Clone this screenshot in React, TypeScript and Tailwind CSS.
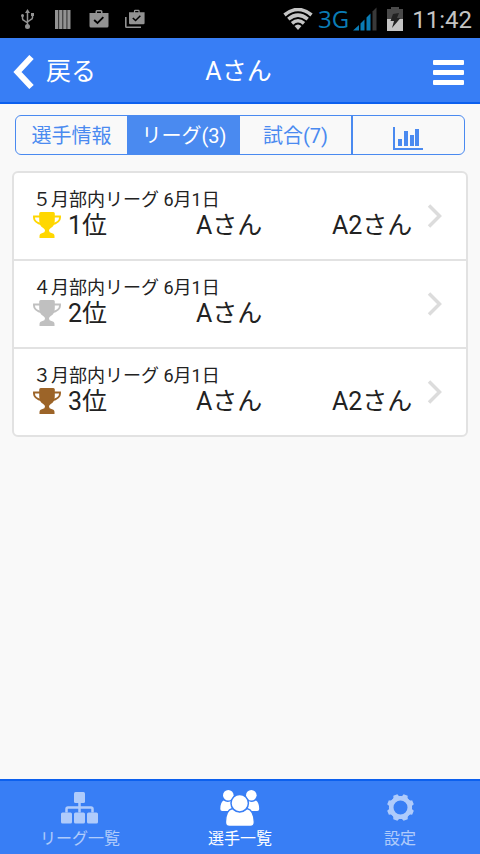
import React, { useState } from "react";

interface League {
  name: string;
  rank: string;
  trophy: string;
  player: string;
  partner?: string;
}

const leagues: League[] = [
  { name: "５月部内リーグ 6月1日", rank: "1位", trophy: "text-[#ffd700]", player: "Aさん", partner: "A2さん" },
  { name: "４月部内リーグ 6月1日", rank: "2位", trophy: "text-[#c0c0c0]", player: "Aさん" },
  { name: "３月部内リーグ 6月1日", rank: "3位", trophy: "text-[#9c6428]", player: "Aさん", partner: "A2さん" },
];

const StoreBag = () => (
  <path
    fillRule="evenodd"
    d="M6 4V2.5A1.5 1.5 0 0 1 7.5 1h4A1.5 1.5 0 0 1 13 2.5V4h6v13a1.5 1.5 0 0 1-1.5 1.5h-16A1.5 1.5 0 0 1 0 17V4zM7.5 4h4V2.5h-4zM5.3 10.3 4 11.7l4 3.6 6.5-6.5-1.3-1.3L8 12.7z"
  />
);

const StatusBar = () => (
  <div className="flex h-[38px] items-center justify-between bg-black pl-5 pr-2">
    <div className="flex items-center text-[#929292]">
      <svg className="h-5 w-4" viewBox="0 0 16 20" fill="none" stroke="currentColor" strokeWidth="1.5">
        <path d="M7.5 2v15M2.5 7v2.5q0 1.5 1.5 2l3.5 2.5M12.5 6v2.5q0 1.5-1.5 2L7.5 13" />
        <path d="M7.5 0 5 4h5zM5 17.5a2.5 2.5 0 1 0 5 0 2.5 2.5 0 1 0-5 0M1 6.5a1.5 1.5 0 1 0 3 0 1.5 1.5 0 1 0-3 0M11 4h3v3h-3z" fill="currentColor" stroke="none" />
      </svg>
      <svg className="ml-[19px] h-[19px] w-4" viewBox="0 0 16 19" fill="currentColor">
        <path d="M0 0h3.4v19H0zM4.1 0h3.4v19H4.1zM8.2 0h3.4v19H8.2zM12.3 0h3.2v19h-3.2z" />
      </svg>
      <svg className="ml-[18px] h-5 w-5" viewBox="0 0 19 20" fill="currentColor">
        <StoreBag />
      </svg>
      <svg className="ml-4 h-5 w-5" viewBox="0 0 20 20" fill="currentColor">
        <g transform="translate(4 0) scale(.82)">
          <StoreBag />
        </g>
        <path d="M0 8h1.6v9.4H16V19H1.5A1.5 1.5 0 0 1 0 17.5z" />
      </svg>
    </div>
    <div className="flex items-center text-[#c4c4c4]">
      <svg className="h-[22px] w-[30px]" viewBox="0 0 30 22" fill="none" stroke="currentColor" strokeWidth="3.6">
        <path d="M1.5 7Q15-4 28.5 7M5.3 11.2Q15 3.2 24.7 11.2M9 15.3Q15 10.2 21 15.3" />
        <path d="M15 22l-3.5-4q3.5-3 7 0z" fill="currentColor" stroke="none" />
      </svg>
      <span className="ml-[5px] font-['Open_Sans',sans-serif] text-2xl leading-8 text-[#0a7cb5]">3G</span>
      <svg className="ml-1 h-6 w-6" viewBox="0 0 24 24" fill="#0a7cb5">
        <path d="M0 23.5 6 18v5.5zM7.5 16.5l4-4v11h-4zM13.5 10.5l4-4v17h-4z" />
        <path d="M19.5 4.5l4-4v23h-4z" fill="#393939" />
      </svg>
      <svg className="ml-[10px] h-6 w-4" viewBox="0 0 16 24">
        <path d="M4 0h8v2h4v22H0V2h4z" fill="#4a4a4a" />
        <path d="M0 12h16v12H0z" fill="#c4c4c4" />
        <path d="M6 7l6-1-2 5h3.5L5 21l2-7H3.5z" fill="#222" />
      </svg>
      <span className="ml-[9px] pt-[2px] text-2xl leading-8">11:42</span>
    </div>
  </div>
);

const Header = () => (
  <header className="grid h-[66px] grid-cols-3 items-center border-b-2 border-[#0c60ee] bg-[#387ef5] pl-[13px] pr-4 pt-1 text-[25px] leading-8 text-white">
    <button type="button" className="flex items-center gap-3 justify-self-start">
      <svg className="h-[34px] w-[21px]" viewBox="0 0 21 34" fill="none" stroke="currentColor" strokeWidth="6">
        <path d="M18.5 2 4.5 17l14 15" />
      </svg>
      戻る
    </button>
    <h1 className="justify-self-center">Aさん</h1>
    <button type="button" aria-label="メニュー" className="flex w-[31px] flex-col gap-[5px] justify-self-end">
      <span className="h-[5px] rounded-[1px] bg-white" />
      <span className="h-[5px] rounded-[1px] bg-white" />
      <span className="h-[5px] rounded-[1px] bg-white" />
    </button>
  </header>
);

const tabs = ["選手情報", "リーグ(3)", "試合(7)"];

const Tabs = () => {
  const [active, setActive] = useState(1);

  return (
    <div className="mx-[15px] mt-[11px] grid h-10 grid-cols-4 overflow-hidden rounded-md border border-[#4a8af0] text-xl leading-6 text-[#4a8af0]">
      {tabs.map((label, i) => (
        <button
          key={label}
          type="button"
          onClick={() => setActive(i)}
          className={
            active === i
              ? "bg-[#4a8af0] pt-[2px] text-white"
              : "border-r border-[#4a8af0] pt-[2px]"
          }
        >
          {label}
        </button>
      ))}
      <button
        type="button"
        aria-label="グラフ"
        onClick={() => setActive(3)}
        className="flex items-center justify-center border-l border-[#4a8af0] pr-[2px] pt-[6px]"
      >
        <svg className="h-[23px] w-[30px]" viewBox="0 0 30 23" fill="currentColor">
          <path d="M0 0h2v21h28v2H0zM5 12h4v7H5zM11 4h4v15h-4zM17 8h4v11h-4zM22 2h4v17h-4z" />
        </svg>
      </button>
    </div>
  );
};

const TrophyIcon = ({ color }: { color: string }) => (
  <svg className={`h-[26px] w-7 ${color}`} viewBox="0 0 28 26" fill="currentColor">
    <path d="M6.2 1.5Q6.2 0 7.7 0h12.6q1.5 0 1.500 1.500V8q0 6-4 8-1.800 1-1.800 2.500 0 2 2.500 2.500 3 .5 3 3v2h-15v-2q0-2.500 3-3 2.500-.5 2.500-2.500 0-1.500-1.800-2.500-4-2-4-8z" />
    <path d="M7 4.5H1v1.3q0 4.8 8.5 6.7M21 4.5h6v1.3q0 4.8-8.5 6.7" fill="none" stroke="currentColor" strokeWidth="1.9" />
  </svg>
);

const LeagueRow = ({ league }: { league: League }) => (
  <li className="border-b-2 border-[#e2e2e2] last:border-b-0">
    <button type="button" className="flex w-full items-center pb-[19px] pl-[19px] pr-6 pt-[15px] text-left">
      <span className="block flex-1">
        <span className="block text-lg leading-6">{league.name}</span>
        <span className="grid grid-cols-[12fr_10fr_7fr] whitespace-nowrap text-[25px] leading-7">
          <span className="flex items-start gap-[7px]">
            <TrophyIcon color={league.trophy} />
            {league.rank}
          </span>
          <span>{league.player}</span>
          <span>{league.partner}</span>
        </span>
      </span>
      <svg className="h-7 w-[15px] pt-1 text-[#dcdcdc]" viewBox="0 0 15 24" fill="none" stroke="currentColor" strokeWidth="3.5">
        <path d="M2 1.5 12.5 12 2 22.5" />
      </svg>
    </button>
  </li>
);

const SitemapIcon = () => (
  <svg className="h-9 w-10" viewBox="0 0 40 36" fill="currentColor">
    <rect x="14" y="2" width="11" height="11" rx="1.5" />
    <rect x="1" y="22.5" width="11" height="11" rx="1.5" />
    <rect x="14" y="22.5" width="11" height="11" rx="1.5" />
    <rect x="27" y="22.5" width="11" height="11" rx="1.5" />
    <path d="M19.5 13v9.5M6.5 22.5V19q0-1.5 1.5-1.5h23q1.5 0 1.5 1.5v3.5" fill="none" stroke="currentColor" strokeWidth="2.5" />
  </svg>
);

const PlayersIcon = () => (
  <svg className="h-9 w-10" viewBox="0 0 40 36" fill="currentColor">
    <circle cx="8.3" cy="5.3" r="5.3" />
    <circle cx="31.3" cy="5.3" r="5.3" />
    <path d="M3.5 10.5Q.3 12.500.3 19q0 2 2 2H12l2-8-3-2q-4 2-7.500-.5zM36 10.500q3.200 2 3.200 8.500 0 2-2 2h-9.700l-2-8 3-2q4 2 7.500-.5z" />
    <path d="M12.500 18.500q7 6 14.500 0 6.800 1.500 7.300 13.500 0 4.500-4 4.500H9.500q-4 0-4-4.500.2-12 7-13.500z" stroke="#387ef5" strokeWidth="1.3" />
    <circle cx="19.7" cy="13.2" r="8.7" stroke="#387ef5" strokeWidth="1.5" />
  </svg>
);

const teeth = [22.5, 67.5, 112.5, 157.5, 202.5, 247.5, 292.5, 337.5];

const GearIcon = () => (
  <svg className="h-9 w-10" viewBox="0 0 40 36" fill="currentColor">
    <circle cx="20.5" cy="17.5" r="9.3" fill="none" stroke="currentColor" strokeWidth="4.6" />
    {teeth.map((angle) => (
      <path key={angle} d="M15.5 8q2.5-1 2.8-4h4.4q.3 3 2.8 4z" transform={`rotate(${angle} 20.5 17.5)`} />
    ))}
  </svg>
);

const navItems = [
  { label: "リーグ一覧", icon: <SitemapIcon /> },
  { label: "選手一覧", icon: <PlayersIcon /> },
  { label: "設定", icon: <GearIcon /> },
];

const Footer = () => {
  const [active, setActive] = useState(1);

  return (
    <nav className="grid h-[75px] grid-cols-3 border-t-2 border-[#0c60ee] bg-[#387ef5] text-white">
      {navItems.map((item, i) => (
        <button
          key={item.label}
          type="button"
          onClick={() => setActive(i)}
          className={`flex flex-col items-center gap-px pt-[9px] text-base leading-6 ${active === i ? "" : "opacity-60"}`}
        >
          {item.icon}
          {item.label}
        </button>
      ))}
    </nav>
  );
};

const App = () => {
  return (
    <div className="flex min-h-screen flex-col bg-[#f9f9f9] font-[Roboto,'Noto_Sans_CJK_JP',sans-serif] text-[#222]">
      <StatusBar />
      <Header />
      <main className="flex-1">
        <Tabs />
        <ul className="mx-3 mt-4 rounded-md border-2 border-[#e2e2e2] bg-white">
          {leagues.map((league) => (
            <LeagueRow key={league.name} league={league} />
          ))}
        </ul>
      </main>
      <Footer />
    </div>
  );
};

export default App;
